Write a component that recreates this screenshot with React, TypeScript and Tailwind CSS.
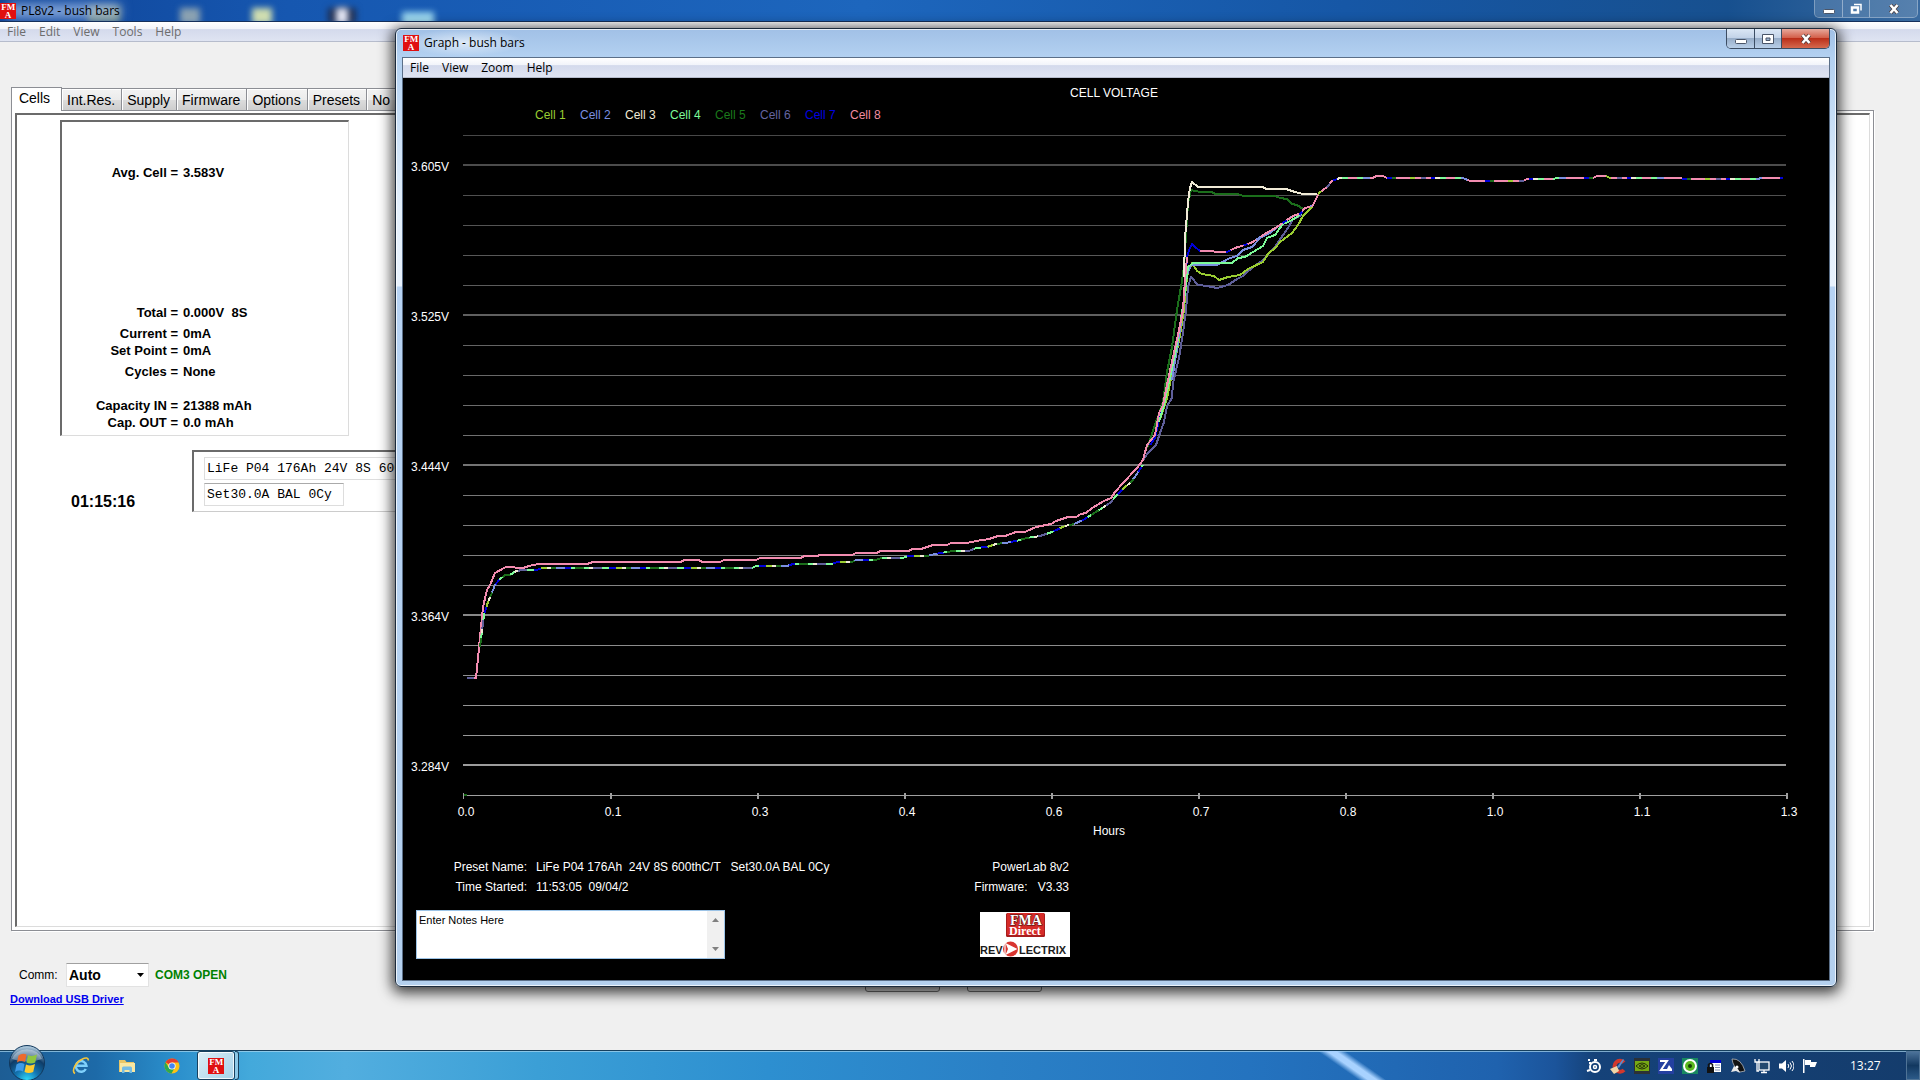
import type { ReactNode } from "react";
import clsx from "clsx";

type Point = [number, number];

const CELLS = [
  { label: "Cell 1", color: "#9acd32", text: "text-[#9acd32]" },
  { label: "Cell 2", color: "#7b8fe0", text: "text-[#7b8fe0]" },
  { label: "Cell 3", color: "#f0ead6", text: "text-[#f0ead6]" },
  { label: "Cell 4", color: "#7dfa98", text: "text-[#7dfa98]" },
  { label: "Cell 5", color: "#1b6e1b", text: "text-[#1b7a1b]" },
  { label: "Cell 6", color: "#5f5f9a", text: "text-[#6464a0]" },
  { label: "Cell 7", color: "#0000d8", text: "text-[#0000e0]" },
  { label: "Cell 8", color: "#f28cb0", text: "text-[#f28ca0]" },
];
const [C1, C2, C3, C4, C5, C6, C7, C8] = CELLS.map((cell) => cell.color);

const GRID = Array.from({ length: 22 }, (_, i) => {
  const shade = Math.round(72 + i * 4);
  return { y: 135 + i * 30, major: i % 5 === 1, color: `rgb(${shade},${shade},${shade})` };
});
const VOLTS = ["3.605V", "3.525V", "3.444V", "3.364V", "3.284V"];
const HOURS = ["0.0", "0.1", "0.3", "0.4", "0.6", "0.7", "0.8", "1.0", "1.1", "1.3"];

const cell8: Point[] = [
  [467, 678], [476, 678], [483, 607], [487, 590], [490, 585], [495, 573], [506, 567], [523, 568], [529, 566], [538, 564],
  [587, 564], [593, 562], [681, 562], [684, 560], [699, 560], [702, 562], [720, 562], [724, 560], [756, 560], [760, 558],
  [801, 558], [804, 556], [817, 556], [820, 555], [852, 555], [856, 553], [877, 553], [880, 551], [909, 551], [912, 549],
  [921, 549], [933, 545], [947, 545], [951, 543], [967, 543], [976, 541], [989, 539], [998, 536], [1005, 536], [1016, 532],
  [1025, 532], [1036, 527], [1051, 524], [1056, 521], [1068, 517], [1076, 517], [1081, 514], [1086, 513], [1092, 508],
  [1104, 501], [1111, 498], [1115, 492], [1123, 483], [1137, 468], [1143, 460], [1147, 445], [1155, 435], [1159, 413],
  [1163, 405], [1168, 380], [1173, 357], [1178, 335], [1183, 310], [1185, 280], [1187, 257],
];

// where cells 1-7 run on top of each other
const shared: Point[] = [
  [480, 647], [484, 615], [488, 602], [491, 595], [495, 585], [499, 580], [505, 575], [510, 575], [516, 571], [523, 570],
  [536, 570], [543, 568], [752, 568], [756, 566], [787, 566], [793, 564], [832, 564], [837, 562], [852, 562], [856, 560],
  [875, 560], [882, 558], [902, 558], [909, 556], [927, 556], [935, 554], [953, 551], [969, 551], [976, 548], [987, 547],
  [996, 544], [1005, 543], [1016, 541], [1027, 538], [1040, 536], [1052, 532], [1065, 526], [1074, 524], [1083, 520],
  [1096, 512], [1110, 503], [1116, 496], [1123, 489], [1132, 481], [1143, 465],
];

const tail: Point[] = [
  [1312, 207], [1315, 201], [1319, 193], [1327, 187], [1332, 181], [1340, 178], [1373, 178], [1376, 176], [1383, 176],
  [1387, 178], [1463, 178], [1470, 181], [1523, 181], [1527, 179], [1553, 179], [1557, 178], [1593, 178], [1597, 176],
  [1606, 176], [1610, 178], [1680, 178], [1684, 179], [1758, 179], [1761, 178], [1783, 178],
];

const upper78: Point[] = [
  [1200, 251], [1227, 252], [1235, 248], [1245, 245], [1253, 242], [1263, 235], [1277, 227], [1290, 218], [1295, 215],
  [1300, 214], [1305, 208], [1312, 206],
];

const lines: { color: string; points: Point[] }[] = [
  { color: C6, points: [[1143, 460], [1148, 453], [1156, 445], [1160, 433], [1164, 422], [1167, 406], [1172, 398], [1173, 383], [1179, 358], [1183, 333], [1186, 310], [1188, 287], [1191, 277], [1198, 285], [1207, 286], [1217, 288], [1228, 285], [1237, 279], [1243, 276], [1253, 267], [1263, 260], [1275, 247], [1283, 235], [1288, 228], [1293, 219], [1302, 215]] },
  { color: C1, points: [[1160, 420], [1167, 398], [1175, 360], [1180, 335], [1184, 310], [1186, 285], [1188, 272], [1192, 263], [1197, 271], [1202, 274], [1214, 276], [1219, 280], [1228, 277], [1240, 275], [1248, 269], [1263, 262], [1268, 254], [1276, 247], [1280, 242], [1292, 233], [1298, 225], [1303, 216], [1312, 207]] },
  { color: C7, points: [[1150, 445], [1155, 438], [1159, 420], [1169, 380], [1179, 335], [1184, 300], [1187, 257], [1189, 250], [1192, 244], [1195, 247], [1200, 251]] },
  { color: C2, points: [[1172, 380], [1180, 330], [1187, 275], [1191, 265], [1217, 265], [1230, 258], [1237, 256], [1243, 250], [1252, 247], [1260, 238], [1270, 233], [1280, 225], [1293, 216], [1300, 214]] },
  { color: C4, points: [[1159, 422], [1164, 405], [1169, 382], [1176, 350], [1184, 300], [1188, 267], [1193, 263], [1232, 263], [1238, 258], [1245, 257], [1253, 252], [1263, 246], [1267, 238], [1275, 235], [1283, 224], [1290, 221], [1297, 217], [1302, 213]] },
  { color: C5, points: [[1147, 448], [1163, 402], [1167, 372], [1172, 347], [1174, 332], [1177, 310], [1182, 281], [1184, 267], [1188, 203], [1191, 190], [1200, 192], [1212, 192], [1215, 194], [1238, 194], [1243, 196], [1275, 196], [1280, 198], [1287, 199], [1292, 204], [1297, 205], [1303, 209]] },
  { color: C8, points: cell8 },
  { color: C3, points: [[1184, 277], [1185, 238], [1188, 202], [1190, 188], [1192, 182], [1198, 187], [1263, 187], [1266, 189], [1286, 189], [1295, 192], [1303, 194], [1317, 194]] },
];

const SHARED_DASHES: [string, number][] = [
  [C5, 9], [C4, 5], [C3, 4], [C6, 9], [C4, 7], [C7, 7], [C1, 6], [C3, 4], [C5, 5], [C2, 9], [C7, 6], [C4, 4],
];
const TAIL_DASHES: [string, number][] = [
  [C8, 14], [C1, 5], [C8, 6], [C6, 5], [C8, 5], [C7, 4], [C3, 5], [C4, 6], [C8, 9], [C4, 6], [C2, 7], [C8, 18], [C7, 5], [C5, 4],
];
const UPPER_DASHES: [string, number][] = [[C8, 26], [C7, 5], [C8, 14], [C7, 4], [C8, 10], [C2, 5]];

function toPoints(points: Point[]) {
  return points.map((p) => p.join(",")).join(" ");
}

function DashedLine({ points, dashes }: { points: Point[]; dashes: [string, number][] }) {
  const total = dashes.reduce((sum, [, len]) => sum + len, 0);
  let start = 0;
  return (
    <>
      {dashes.map(([color, len], i) => {
        const offset = -start;
        start += len;
        return (
          <polyline key={i} points={toPoints(points)} stroke={color} strokeDasharray={`${len} ${total - len}`} strokeDashoffset={offset} />
        );
      })}
    </>
  );
}

function VoltageChart() {
  return (
    <svg viewBox="403 125 1426 696" className="block w-full" role="img" aria-label="Cell voltage over time">
      <g shapeRendering="crispEdges">
        {GRID.map((line) => (
          <rect key={line.y} x={463} y={line.major ? line.y - 1 : line.y} width={1323} height={line.major ? 2 : 1} fill={line.color} />
        ))}
        <rect x={463} y={795} width={1323} height={1} fill="#a0a0a0" />
        {HOURS.map((hour, i) => (
          <rect key={hour} x={463 + i * 147} y={793} width={i === 0 ? 1 : 2} height={6} fill="#a0a0a0" />
        ))}
        <rect x={464} y={794} width={3} height={2} fill="#1b6e1b" />
      </g>
      <g fill="none" strokeWidth={2} strokeLinejoin="round" shapeRendering="crispEdges">
        {lines.map((line) => (
          <polyline key={line.color} points={toPoints(line.points)} stroke={line.color} />
        ))}
        <polyline points="467,678 474,678" stroke={C6} />
        <DashedLine points={shared} dashes={SHARED_DASHES} />
        <DashedLine points={upper78} dashes={UPPER_DASHES} />
        <DashedLine points={tail} dashes={TAIL_DASHES} />
      </g>
      <g fill="#fff" fontSize={12} fontFamily="'Liberation Sans', Arial, sans-serif">
        {VOLTS.map((volt, i) => (
          <text key={volt} x={449} y={171 + i * 150} textAnchor="end">{volt}</text>
        ))}
        {HOURS.map((hour, i) => (
          <text key={hour} x={466 + i * 147} y={816} textAnchor="middle">{hour}</text>
        ))}
      </g>
    </svg>
  );
}

function FmaIcon({ className }: { className: string }) {
  return (
    <svg viewBox="0 0 16 16" className={className} aria-hidden="true">
      <rect width="16" height="16" fill="#e01010" />
      <g fill="#fff" fontFamily="'Liberation Serif', serif" fontWeight="bold" fontSize="9" textAnchor="middle">
        <text x="4" y="7">F</text>
        <text x="11" y="7">M</text>
        <text x="8" y="15">A</text>
      </g>
    </svg>
  );
}

function MenuBar({ items, muted }: { items: string[]; muted?: boolean }) {
  return (
    <nav
      className={clsx(
        "flex h-5 shrink-0 items-center gap-[13px] border-b border-[#b6bccc] bg-[linear-gradient(#ffffff_0%,#f2f4fa_35%,#d4daec_40%,#dfe4f2_100%)] px-[7px] text-[12px] leading-4",
        muted ? "text-[#6d6d6d]" : "text-black",
      )}
    >
      {items.map((item) => (
        <button key={item}>{item}</button>
      ))}
    </nav>
  );
}

function CaptionButtons({ active }: { active?: boolean }) {
  const base = active
    ? "border-[#3c4d63] bg-[linear-gradient(#dbe7f5_0%,#c3d3e8_45%,#98aec9_50%,#b9cfe8_100%)]"
    : "border-white/40 bg-white/15";
  return (
    <div className={clsx("flex overflow-hidden rounded-b-[5px] border border-t-0", active ? "h-5 border-[#3c4d63]" : "h-[18px] border-white/40")}>
      <button aria-label="Minimize" className={clsx("flex w-[28px] items-center justify-center border-r", base)}>
        <svg viewBox="0 0 14 12" className="h-3 w-3.5"><rect x="1.5" y="6.5" width="11" height="4" rx="1" fill="#fff" stroke="#4a5568" strokeWidth="1" /></svg>
      </button>
      <button aria-label={active ? "Maximize" : "Restore"} className={clsx("flex w-[27px] items-center justify-center border-r", base)}>
        {active ? (
          <svg viewBox="0 0 14 12" className="h-3 w-3.5"><path d="M1.5 1.5h11v9h-11zM5 5v2.500h4V5z" fill="#fff" fillRule="evenodd" stroke="#4a5568" /></svg>
        ) : (
          <svg viewBox="0 0 14 12" className="h-3 w-3.5" fill="none"><path d="M5 1.500h7v6" stroke="#fff" strokeWidth="1.500" /><path d="M3 4.500h6v5H3z" stroke="#fff" strokeWidth="2.500" /></svg>
        )}
      </button>
      <button
        aria-label="Close"
        className={clsx(
          "flex w-[47px] items-center justify-center",
          active ? "bg-[linear-gradient(#e7a99c_0%,#d4614c_45%,#bb2f1a_50%,#d5694e_100%)]" : "bg-white/15",
        )}
      >
        <svg viewBox="0 0 14 12" className="h-3 w-3.5" fill="none">
          <path d="M3.500 2l7 8M10.500 2l-7 8" stroke="#4a3a3a" strokeWidth="4" />
          <path d="M3.500 2l7 8M10.500 2l-7 8" stroke="#fff" strokeWidth="2.600" />
        </svg>
      </button>
    </div>
  );
}

function Reading({ label, value, className }: { label: string; value: string; className?: string }) {
  return (
    <div className={clsx("flex gap-[5px]", className)}>
      <dt className="w-[116px] text-right">{label} =</dt>
      <dd className="whitespace-pre">{value}</dd>
    </div>
  );
}

const TABS = ["Int.Res.", "Supply", "Firmware", "Options", "Presets", "No"];

function MainWindow() {
  return (
    <section className="flex min-h-0 flex-1 flex-col bg-[#f0f0f0]">
      <header className="relative flex h-[22px] shrink-0 items-start justify-between overflow-hidden border-b border-[#15305c] bg-[linear-gradient(90deg,#0f4498_0%,#1657b0_15%,#1d66bd_45%,#1657a6_70%,#17508f_90%,#3a6ba0_100%)]">
        <div className="absolute left-[88px] top-1.5 h-4 w-8 bg-[#d8c94a]/50 blur-[3px]" />
        <div className="absolute left-2 top-1 h-3.5 w-28 bg-[#a9c4ee]/80 blur-[6px]" />
        <div className="absolute left-[180px] top-2 h-4 w-5 bg-[#a9b6b4]/80 blur-[3px]" />
        <div className="absolute left-[252px] top-2 h-4 w-5 bg-[#e3ecb0]/90 blur-[3px]" />
        <div className="absolute left-[328px] top-2 h-4 w-7 bg-[#202a48]/90 blur-[3px]" />
        <div className="absolute left-[336px] top-2 h-4 w-3 bg-[#e4e6f4] blur-[3px]" />
        <div className="absolute left-[402px] top-3 h-4 w-8 bg-[#a8e4f6]/90 blur-[3px]" />
        <div className="relative flex h-[21px] items-center gap-[5px]">
          <FmaIcon className="h-4 w-4" />
          <h1 className="text-[12px] leading-4">PL8v2 - bush bars</h1>
        </div>
        <div className="relative mr-[2px]">
          <CaptionButtons />
        </div>
      </header>
      <MenuBar items={["File", "Edit", "View", "Tools", "Help"]} muted />

      <div className="flex min-h-0 flex-1 flex-col pl-[11px] pr-[46px] pt-[45px] font-['Liberation_Sans',Arial,sans-serif]">
        <div role="tablist" className="flex items-end text-[14px] leading-5">
          <button role="tab" aria-selected="true" className="relative z-10 -mb-px h-6 w-[51px] border border-b-0 border-[#8c8e94] bg-white pb-1 pr-1 leading-4">
            Cells
          </button>
          {TABS.map((tab) => (
            <button key={tab} role="tab" aria-selected="false" className="h-[22px] whitespace-nowrap border border-b-0 border-l-0 border-[#8c8e94] bg-[linear-gradient(#f3f3f3_0%,#ebebeb_50%,#dddddd_51%,#cdcdcd_100%)] pl-[5px] pr-1.5 shadow-[inset_1px_1px_0_#fff]">
              {tab}
            </button>
          ))}
        </div>
        <div className="flex min-h-0 flex-1 border border-[#8c8e94] bg-white p-[3px] pt-[2px] shadow-[1px_1px_0_#fff]">
          <div className="flex-1 border-2 border-b border-r border-[#6b6b6b] border-b-[#dcdcdc] border-r-[#dcdcdc] pl-[43px] pt-[5px] text-[13px] leading-[17px]">
            <dl className="h-[316px] w-[289px] border-2 border-b border-r border-[#6b6b6b] border-b-[#dcdcdc] border-r-[#dcdcdc] pt-[42px] font-bold">
              <Reading label="Avg. Cell" value="3.583V" />
              <Reading label="Total" value="0.000V  8S" className="mt-[123px]" />
              <Reading label="Current" value="0mA" className="mt-1" />
              <Reading label="Set Point" value="0mA" />
              <Reading label="Cycles" value="None" className="mt-1" />
              <Reading label="Capacity IN" value="21388 mAh" className="mt-[17px]" />
              <Reading label="Cap. OUT" value="0.0 mAh" />
            </dl>
            <div className="mt-3.5 flex">
              <div className="w-[132px] pl-[11px] pt-[42px] text-[16px] font-bold leading-5">01:15:16</div>
              <div className="h-[62px] w-[350px] border-2 border-b border-[#6b6b6b] border-b-[#cccccc] pl-2.5 pt-[5px] font-['Liberation_Mono',monospace]">
                <input aria-label="Preset name" readOnly defaultValue="LiFe P04 176Ah 24V 8S 600thC/T" className="block h-[23px] w-[280px] border border-[#dddddd] px-0.5" />
                <input aria-label="Preset settings" readOnly defaultValue="Set30.0A BAL 0Cy" className="mt-[3px] block h-[23px] w-[140px] border border-[#dddddd] border-t-[#aaaaaa] px-0.5" />
              </div>
            </div>
          </div>
        </div>
      </div>

      <footer className="flex h-[119px] shrink-0 items-start pl-2.5 pt-8 font-['Liberation_Sans',Arial,sans-serif]">
        <div>
          <div className="flex items-center">
            <label htmlFor="comm" className="w-14 pl-[9px] text-[12px] leading-6">Comm:</label>
            <div className="relative">
              <select id="comm" className="h-6 w-[83px] appearance-none border border-[#e2e2e2] border-t-[#a0a0a0] bg-white pl-0.5 text-[14px] font-bold leading-5">
                <option>Auto</option>
              </select>
              <svg viewBox="0 0 8 4" className="pointer-events-none absolute right-1 top-2.5 h-1 w-2"><path d="M0 0h7L3.500 4z" /></svg>
            </div>
            <span className="ml-1.5 text-[12px] font-bold leading-6 text-[#008000]">COM3 OPEN</span>
          </div>
          <a href="#driver" className="mt-1 block text-[11px] font-bold leading-4 text-[#0000ee] underline">Download USB Driver</a>
        </div>
        <div className="ml-[638px] flex gap-[27px]">
          <button aria-label="Start" className="h-[29px] w-[75px] rounded-[3px] border border-[#707070] bg-[#e4e4e4]" />
          <button aria-label="Stop" className="h-[29px] w-[75px] rounded-[3px] border border-[#707070] bg-[#e4e4e4]" />
        </div>
      </footer>
    </section>
  );
}

function LogoCard() {
  return (
    <svg viewBox="0 0 90 45" className="h-[45px] w-[90px]" role="img" aria-label="FMA Direct Revolectrix">
      <rect width="90" height="45" fill="#fff" />
      <rect x="26" y="1" width="39" height="24" rx="1.500" fill="#a81d1d" />
      <rect x="27" y="1" width="37" height="22" rx="1" fill="#d62b28" />
      <g fontFamily="'Liberation Serif', serif" fontWeight="bold" textAnchor="middle">
        <text x="46" y="13" fontSize="14" fill="#fff" stroke="#4a0c0c" strokeWidth="1" paintOrder="stroke">FMA</text>
        <text x="45" y="23" fontSize="12" fill="#fff">Direct</text>
      </g>
      <g fontFamily="'Liberation Sans', Arial, sans-serif" fontWeight="bold" fontSize="11" fill="#1c1c1c">
        <text x="0" y="42">REV</text>
        <text x="39" y="42">LECTRIX</text>
      </g>
      <circle cx="30.500" cy="37" r="7.500" fill="#d8342f" />
      <path d="M25.500 31l12 6-12 6 2.500-6z" fill="#fff" />
      <path d="M25 30v14" stroke="#fff" strokeWidth="1.200" />
    </svg>
  );
}

function GraphWindow() {
  return (
    <section className="absolute bottom-[93px] left-[395px] right-[83px] top-7 flex flex-col rounded-[6px] border border-[#1c2b3c] bg-[linear-gradient(#a1c0e6_0px,#b3d1f1_28px,#e4f0fc_180px,#e8f2fd_257px,#b7d3f3_258px,#b4d0ee_100%)] px-1.5 pb-[5px] shadow-[0_3px_14px_3px_rgba(0,0,0,0.75),inset_0_0_0_1px_rgba(255,255,255,0.75)]">
      <header className="flex h-7 shrink-0 items-start justify-between pl-px">
        <div className="flex h-[27px] items-center gap-[5px] bg-[radial-gradient(ellipse_at_center,rgba(255,255,255,0.6)_0%,rgba(255,255,255,0)_70%)]">
          <FmaIcon className="h-4 w-4" />
          <h2 className="text-[12px] leading-4">Graph - bush bars</h2>
        </div>
        <CaptionButtons active />
      </header>
      <div className="flex min-h-0 flex-1 flex-col border border-[#5b6f88] bg-black">
        <MenuBar items={["File", "View", "Zoom", "Help"]} />
        <div className="flex min-h-0 flex-1 flex-col overflow-hidden bg-black font-['Liberation_Sans',Arial,sans-serif] text-[12px] leading-4 text-white">
          <h3 className="mt-[7px] pr-1 text-center">CELL VOLTAGE</h3>
          <ul className="mb-[2px] mt-1.5 flex gap-3 pl-[132px]">
            {CELLS.map((cell) => (
              <li key={cell.label} className={clsx("w-[33px] whitespace-nowrap", cell.text)}>{cell.label}</li>
            ))}
          </ul>
          <VoltageChart />
          <p className="mt-0.5 pl-[690px]">Hours</p>
          <div className="mt-5 flex">
            <dl className="grid w-[577px] grid-cols-[124px_1fr] gap-x-[9px] gap-y-1">
              <dt className="text-right">Preset Name:</dt>
              <dd className="whitespace-pre">{"LiFe P04 176Ah  24V 8S 600thC/T   Set30.0A BAL 0Cy"}</dd>
              <dt className="text-right">Time Started:</dt>
              <dd className="whitespace-pre">{"11:53:05  09/04/2"}</dd>
            </dl>
            <div className="flex w-[89px] flex-col items-end gap-1 whitespace-pre">
              <p>PowerLab 8v2</p>
              <p>{"Firmware:   V3.33"}</p>
            </div>
          </div>
          <div className="mt-[15px] flex items-start gap-[255px] pl-[13px]">
            <div className="flex h-[49px] w-[309px] border border-[#9cc3e6] bg-white">
              <textarea aria-label="Notes" defaultValue="Enter Notes Here" className="min-w-0 flex-1 resize-none overflow-hidden px-0.5 pt-px text-[11px] leading-4 text-black" />
              <div className="flex w-[17px] flex-col justify-between bg-[#f0f0f0]">
                <ScrollButton label="Scroll up" path="M0 4h7L3.500 0z" />
                <ScrollButton label="Scroll down" path="M0 0h7L3.500 4z" />
              </div>
            </div>
            <div className="pt-0.5">
              <LogoCard />
            </div>
          </div>
        </div>
      </div>
    </section>
  );
}

function ScrollButton({ label, path }: { label: string; path: string }) {
  return (
    <button aria-label={label} className="flex h-[18px] items-center justify-center">
      <svg viewBox="0 0 7 4" className="h-1 w-[7px]"><path d={path} fill="#808080" /></svg>
    </button>
  );
}

function StartOrb() {
  return (
    <svg viewBox="0 0 36 36" className="h-9 w-9">
      <defs>
        <radialGradient id="orb" cx="50%" cy="100%" r="95%">
          <stop offset="0" stopColor="#2fe0ff" />
          <stop offset="0.350" stopColor="#1477b4" />
          <stop offset="0.700" stopColor="#0e3c68" />
          <stop offset="1" stopColor="#a8c4d8" />
        </radialGradient>
      </defs>
      <circle cx="18" cy="18" r="17.500" fill="url(#orb)" stroke="#12385c" />
      <path d="M3 14a15.500 13 0 0 1 30 0q-15 5-30 0z" fill="#fff" opacity="0.350" />
      <path d="M9.500 10.500q4-3 8-1l-1.500 7.500q-4-2-8 .5z" fill="#ee6a2c" />
      <path d="M19 10q4 2 9-.5l-1.800 8q-4.500 2-8.700 0z" fill="#8fc640" />
      <path d="M7.500 19.500q4-2.500 8-.5L14 26.500q-4-2-8 .5z" fill="#3f9be8" />
      <path d="M17 19.500q4.500 2 9-.5l-1.800 8q-4.500 2-8.700 0z" fill="#fccb30" />
    </svg>
  );
}

function IeIcon() {
  return (
    <svg viewBox="0 0 18 18" className="h-[18px] w-[18px]" fill="none">
      <path d="M13.800 12a5.300 5.300 0 1 1 .6-3.300H5" stroke="#7fd0fb" strokeWidth="2.500" />
      <path d="M3 16.500C-1 14 4 5 10 2.200c4-2 6.500-1.500 6.300 1.300" stroke="#f5c53a" strokeWidth="1.600" />
    </svg>
  );
}

function ExplorerIcon() {
  return (
    <svg viewBox="0 0 18 18" className="h-[18px] w-[18px]">
      <path d="M1 3h6l1.500 2H16v10H1z" fill="#e8c667" />
      <path d="M2 6h15v9H2z" fill="#f8e7a2" />
      <path d="M4 16v-5q0-1.500 1.500-1.500h7Q14 9.500 14 11v5h-2.500v-3h-5v3z" fill="#74bce4" />
    </svg>
  );
}

function ChromeIcon() {
  return (
    <svg viewBox="0 0 16 16" className="h-4 w-4">
      <circle cx="8" cy="8" r="7.500" fill="#fbc116" />
      <path d="M8 8L1.500 4.300A7.500 7.500 0 0 1 14.700 4.600H8z" fill="#e33b2e" />
      <path d="M1.500 4.300A7.500 7.500 0 0 0 7.500 15.500L10.800 9.500 8 8 4.900 9.800z" fill="#2da94f" />
      <circle cx="8" cy="8" r="3.600" fill="#fff" />
      <circle cx="8" cy="8" r="2.800" fill="#4285f4" />
    </svg>
  );
}

const TRAY: { name: string; art: ReactNode }[] = [
  { name: "Disc tool", art: <g fill="none" stroke="#fff"><circle cx="9" cy="9" r="5" strokeWidth="2" /><circle cx="9" cy="9" r="1.500" strokeWidth="1.500" /><path d="M2 2h2M3 5h2M8 2h3M1 13l3-1" strokeWidth="2" /></g> },
  { name: "Cleaner", art: <g><path d="M14 4.500A5.500 5.500 0 1 0 14 12" fill="none" stroke="#d2382c" strokeWidth="4" /><path d="M0 11l7-3 2 5-5 3z" fill="#f0d6a8" /><path d="M7 9l6-8 1 1-5 8z" fill="#5a8fd0" /></g> },
  { name: "Graphics", art: <g><rect width="16" height="16" fill="#2b3136" /><rect x="1" y="3" width="14" height="10" fill="#76a914" /><path d="M2 8q6-6 12 0-6 6-12 0zM5 8q3-3 6 0-3 3-6 0z" fill="none" stroke="#263208" /></g> },
  { name: "Firewall", art: <g><rect width="16" height="16" fill="#2440a0" /><path d="M2 3h7L3 12h11" fill="none" stroke="#fff" strokeWidth="2" /><path d="M11 7l3 4H9z" fill="#fff" /></g> },
  { name: "Webcam", art: <g><rect width="16" height="16" fill="#188860" /><circle cx="8" cy="8" r="7" fill="#fff" /><circle cx="8" cy="8" r="5" fill="#5cb81e" /><circle cx="8" cy="8" r="2" fill="#163c08" /></g> },
  { name: "Screen lock", art: <g><rect x="4" y="2" width="11" height="12" fill="#fff" /><rect x="4" y="2" width="11" height="3" fill="#0000d0" /><path d="M9 7h5M9 9.500h5M9 12h5" stroke="#8090b0" /><rect x="1" y="9" width="7" height="6" fill="#111" /><path d="M2.500 9V6.500q2-2 4 0V9" fill="none" stroke="#111" strokeWidth="1.500" /></g> },
  { name: "Pirate hat", art: <g><path d="M2 1q9-1 13 12l-5 1Q3 9 2 1z" fill="#111" stroke="#c8c8c8" strokeWidth="0.700" /><path d="M1 14l3-6 4 3 2 4-4-2z" fill="#e8e8e8" /><circle cx="7" cy="9" r="1.500" fill="#fff" /></g> },
  { name: "Network", art: <g fill="none" stroke="#fff" strokeWidth="1.300"><rect x="5" y="4" width="10" height="8" fill="#24496e" /><path d="M7 14.500h6M10 12v2M1 1v3h4V1M3 4v9h2" /></g> },
  { name: "Volume", art: <g><path d="M1 5.500h3L8 2v12l-4-3.500H1z" fill="#fff" /><path d="M10 6q1.500 2 0 4M12 4.500q3 3.500 0 7M14 3q4 5 0 10" fill="none" stroke="#fff" /></g> },
  { name: "Action center", art: <g fill="#fff"><path d="M1 1h1.500v14H1zM3 2h6v2h6l-2 5H8V7H3z" /></g> },
];

function Taskbar() {
  return (
    <footer className="relative z-10 flex h-[30px] shrink-0 items-center border-t border-[#16405e] bg-[linear-gradient(90deg,#1d5d94_0%,#1d6aa8_5%,#2a8ecb_9%,#43a9db_13%,#52aedf_18%,#3b9fd6_28%,#2d8fd0_40%,#2a80c6_52%,#2473bf_65%,#1f62ae_78%,#1b549b_81%,#154279_83%,#143c6c_100%)] shadow-[inset_0_1px_0_rgba(170,215,240,0.7)]">
      <div className="absolute left-[1338px] top-0 h-full w-7 -skew-x-[-55deg] bg-[linear-gradient(90deg,transparent,#a8d2ff_35%,#a8d2ff_65%,transparent)]" />
      <button aria-label="Start menu" className="-mt-1.5 ml-[9px] h-9 w-9"><StartOrb /></button>
      <div className="ml-[27px] flex items-center gap-7">
        <button aria-label="Internet Explorer"><IeIcon /></button>
        <button aria-label="File Explorer"><ExplorerIcon /></button>
        <button aria-label="Chrome"><ChromeIcon /></button>
      </div>
      <button aria-label="PL8v2" className="ml-[17px] flex h-[29px] w-[38px] items-center justify-center rounded-[3px] border border-[#17405e] bg-[linear-gradient(135deg,#dceef6,#a5d2e8)] shadow-[inset_0_0_0_1px_rgba(255,255,255,0.8)]">
        <FmaIcon className="h-4 w-4" />
      </button>
      <div className="h-[29px] w-1 rounded-r-[3px] border border-l-0 border-[#17405e] bg-[#8cc8e6]" />
      <div className="ml-auto flex items-center gap-2">
        {TRAY.map((item) => (
          <button key={item.name} aria-label={item.name}>
            <svg viewBox="0 0 16 16" className="h-4 w-4">{item.art}</svg>
          </button>
        ))}
      </div>
      <time className="ml-8 w-8 text-[12px] leading-4 text-white">13:27</time>
      <button aria-label="Show desktop" className="ml-6 h-[29px] w-3.5 border border-[#4f7396] bg-[linear-gradient(#4b7299,#123860_50%,#2c5a88)]" />
    </footer>
  );
}

export default function App() {
  return (
    <main className="relative flex h-screen min-h-[900px] flex-col overflow-hidden bg-[#f0f0f0] font-['Open_Sans','Noto_Sans',sans-serif] text-black">
      <MainWindow />
      <GraphWindow />
      <Taskbar />
    </main>
  );
}
